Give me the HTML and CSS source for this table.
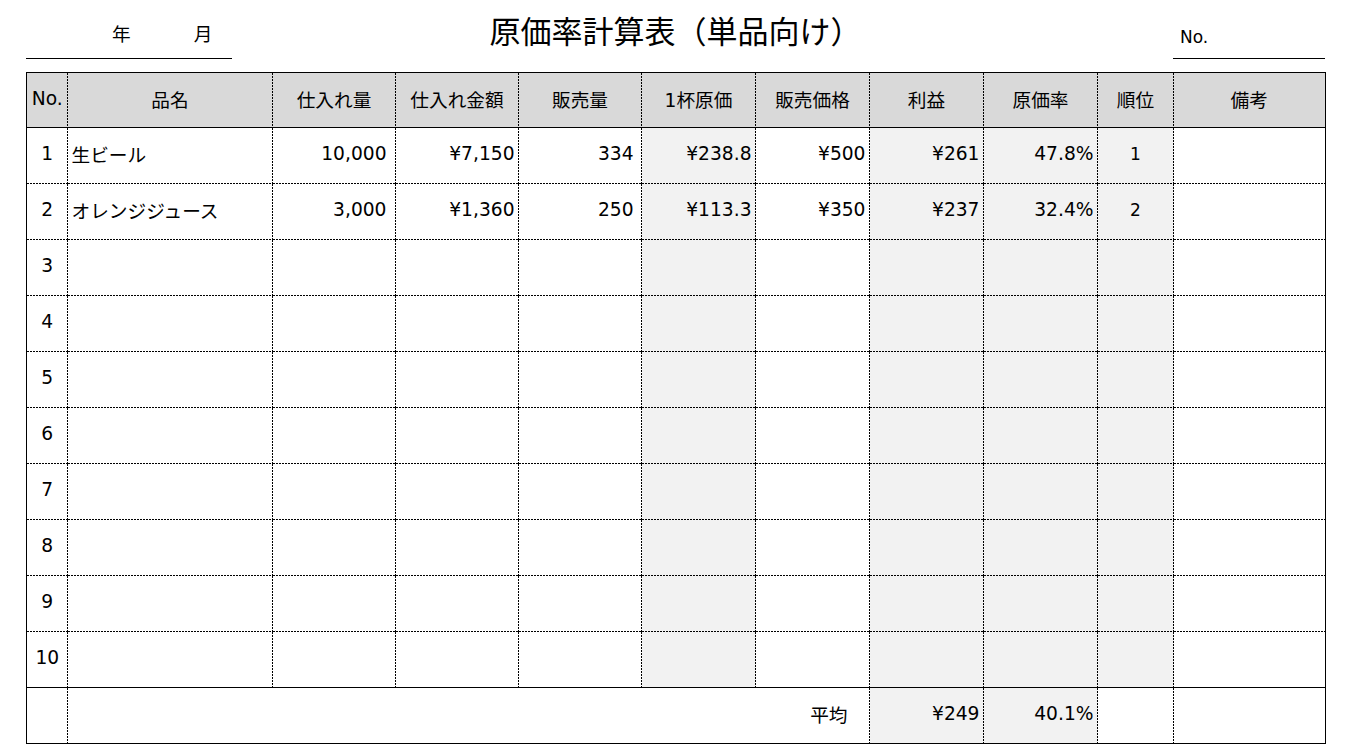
FILE: index.html
```html
<!DOCTYPE html>
<html lang="ja">
<head>
<meta charset="utf-8">
<title>原価率計算表（単品向け）</title>
<link rel="stylesheet" href="styles.css">
</head>
<body>
<div class="page">
  <header class="top">
    <div class="date"><span class="year">年</span><span class="month">月</span></div>
    <h1 class="title">原価率計算表（単品向け）</h1>
    <div class="docno">No.</div>
  </header>
  <table class="sheet">
    <colgroup>
      <col style="width:41px"><col style="width:205px"><col style="width:123px"><col style="width:123px"><col style="width:123px"><col style="width:114px"><col style="width:114px"><col style="width:114px"><col style="width:114px"><col style="width:76px"><col style="width:152px">
    </colgroup>
    <thead>
      <tr>
        <th>No.</th><th>品名</th><th>仕入れ量</th><th>仕入れ金額</th><th>販売量</th><th>1杯原価</th><th>販売価格</th><th>利益</th><th>原価率</th><th>順位</th><th>備考</th>
      </tr>
    </thead>
    <tbody>
      <tr><td class="no">1</td><td class="name">生ビール</td><td class="num pr9">10,000</td><td class="num">¥7,150</td><td class="num pr8">334</td><td class="num g">¥238.8</td><td class="num">¥500</td><td class="num g">¥261</td><td class="num g">47.8%</td><td class="rank g">1</td><td></td></tr>
      <tr><td class="no">2</td><td class="name">オレンジジュース</td><td class="num pr9">3,000</td><td class="num">¥1,360</td><td class="num pr8">250</td><td class="num g">¥113.3</td><td class="num">¥350</td><td class="num g">¥237</td><td class="num g">32.4%</td><td class="rank g">2</td><td></td></tr>
      <tr><td class="no">3</td><td></td><td></td><td></td><td></td><td class="g"></td><td></td><td class="g"></td><td class="g"></td><td class="g"></td><td></td></tr>
      <tr><td class="no">4</td><td></td><td></td><td></td><td></td><td class="g"></td><td></td><td class="g"></td><td class="g"></td><td class="g"></td><td></td></tr>
      <tr><td class="no">5</td><td></td><td></td><td></td><td></td><td class="g"></td><td></td><td class="g"></td><td class="g"></td><td class="g"></td><td></td></tr>
      <tr><td class="no">6</td><td></td><td></td><td></td><td></td><td class="g"></td><td></td><td class="g"></td><td class="g"></td><td class="g"></td><td></td></tr>
      <tr><td class="no">7</td><td></td><td></td><td></td><td></td><td class="g"></td><td></td><td class="g"></td><td class="g"></td><td class="g"></td><td></td></tr>
      <tr><td class="no">8</td><td></td><td></td><td></td><td></td><td class="g"></td><td></td><td class="g"></td><td class="g"></td><td class="g"></td><td></td></tr>
      <tr><td class="no">9</td><td></td><td></td><td></td><td></td><td class="g"></td><td></td><td class="g"></td><td class="g"></td><td class="g"></td><td></td></tr>
      <tr class="last"><td class="no">10</td><td></td><td></td><td></td><td></td><td class="g"></td><td></td><td class="g"></td><td class="g"></td><td class="g"></td><td></td></tr>
    </tbody>
    <tfoot>
      <tr><td></td><td colspan="6" class="avg">平均</td><td class="num g">¥249</td><td class="num g">40.1%</td><td></td><td></td></tr>
    </tfoot>
  </table>
</div>
</body>
</html>
```

FILE: styles.css
```css
html, body {
  margin: 0;
  padding: 0;
  background: #ffffff;
}

body {
  font-family: "DejaVu Sans", "Noto Sans CJK JP", sans-serif;
  font-size: 18.67px;
  color: #000;
}

.page {
  width: 1299px;
  margin: 0 26px;
}

.top {
  display: grid;
  grid-template-columns: 1fr auto 1fr;
  height: 72px;
}

.date {
  justify-self: start;
  width: 206px;
  height: 59px;
  box-sizing: border-box;
  border-bottom: 1px solid #000;
  padding-top: 23px;
  line-height: 24px;
  display: flex;
}

.year {
  margin-left: 86px;
}

.month {
  margin-left: 63px;
}

.title {
  margin: 0;
  padding-top: 10px;
  font-size: 31px;
  line-height: 40px;
  font-weight: normal;
  font-family: "Noto Sans CJK JP", sans-serif;
  white-space: nowrap;
}

.docno {
  justify-self: end;
  width: 152px;
  height: 59px;
  box-sizing: border-box;
  border-bottom: 1px solid #000;
  padding: 25px 0 0 7px;
  line-height: 24px;
  font-size: 17px;
}

.sheet {
  --vdash: repeating-linear-gradient(to bottom, #000 0 2px, transparent 2px 3px);
  --hdash: repeating-linear-gradient(to right, #000 0 2px, transparent 2px 3px);
  border-collapse: collapse;
  table-layout: fixed;
  width: 1299px;
  border: 1px solid #000;
}

.sheet th,
.sheet td {
  border: none;
  padding: 0 4px 4px;
  font-weight: normal;
  white-space: nowrap;
  overflow: hidden;
  background-image: var(--vdash), var(--hdash);
  background-size: 1px 100%, 100% 1px;
  background-position: right top, left bottom;
  background-repeat: no-repeat;
}

.sheet th:last-child,
.sheet td:last-child {
  background-size: 0 0, 100% 1px;
}

.sheet thead tr {
  height: 55px;
}

.sheet thead th {
  background-color: #d9d9d9;
  border-bottom: 1px solid #000;
  text-align: center;
  background-size: 1px 100%, 0 0;
}

.sheet thead th:last-child {
  background-size: 0 0, 0 0;
}

.sheet tbody tr,
.sheet tfoot tr {
  height: 56px;
}

.sheet tbody tr.last td {
  background-size: 1px 100%, 0 0;
}

.sheet tbody tr.last td:last-child {
  background-size: 0 0, 0 0;
}

.sheet tfoot td {
  border-top: 1px solid #000;
  background-size: 1px 100%, 0 0;
}

.sheet tfoot td:last-child {
  background-size: 0 0, 0 0;
}

.no {
  text-align: center;
}

.name {
  text-align: left;
}

.num {
  text-align: right;
}

.sheet .pr9 {
  padding-right: 9px;
}

.sheet .pr8 {
  padding-right: 8px;
}

.rank {
  text-align: center;
  font-size: 17px;
}

.sheet .g {
  background-color: #f2f2f2;
}

.sheet .avg {
  text-align: right;
  padding-right: 22px;
}
```
